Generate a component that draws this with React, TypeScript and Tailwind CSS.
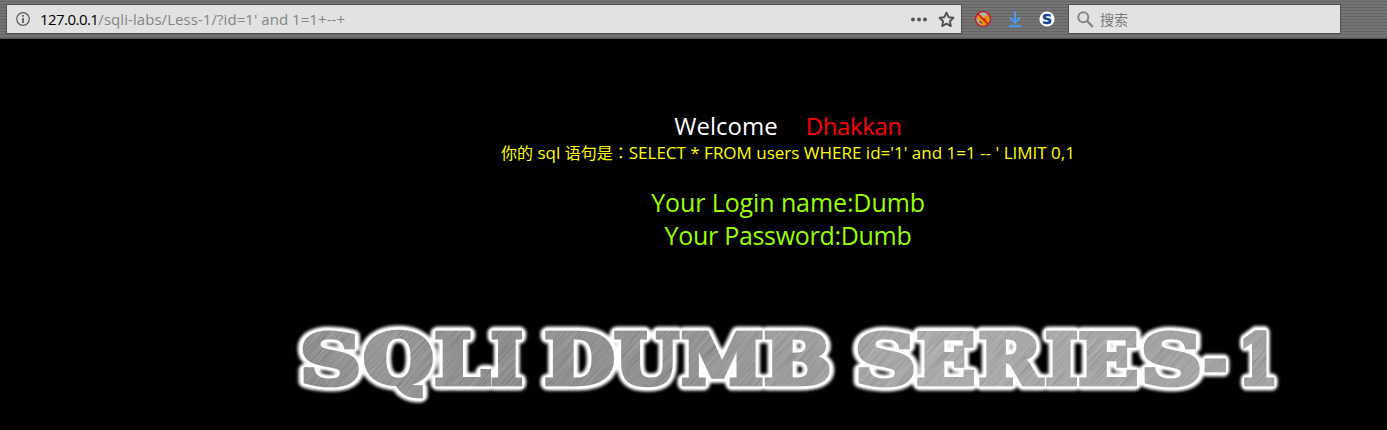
import { useMemo } from 'react';

type Glyph = { ch: string; left: number; right: number };

const glyphs: Glyph[] = [
  { ch: 'S', left: 302, right: 359 },
  { ch: 'Q', left: 363, right: 434 },
  { ch: 'L', left: 435, right: 491 },
  { ch: 'I', left: 491.5, right: 523 },
  { ch: 'D', left: 545, right: 614 },
  { ch: 'U', left: 614, right: 680 },
  { ch: 'M', left: 681, right: 763.5 },
  { ch: 'B', left: 764.5, right: 830 },
  { ch: 'S', left: 857, right: 914 },
  { ch: 'E', left: 917, right: 975 },
  { ch: 'R', left: 979, right: 1045 },
  { ch: 'I', left: 1046, right: 1078 },
  { ch: 'E', left: 1079, right: 1138 },
  { ch: 'S', left: 1143, right: 1200 },
  { ch: '-', left: 1204, right: 1226 },
  { ch: '1', left: 1243, right: 1275 },
];

const STROKE = 4.6;
const SIZE = 69;

function Banner() {
  const placed = useMemo(() => {
    const ctx = document.createElement('canvas').getContext('2d')!;
    ctx.font = `bold ${SIZE}px "DejaVu Serif"`;
    return glyphs.map((g) => {
      const m = ctx.measureText(g.ch);
      const ink = m.actualBoundingBoxRight + m.actualBoundingBoxLeft;
      const sx = (g.right - g.left) / (ink + STROKE);
      const x = g.left + (m.actualBoundingBoxLeft + STROKE / 2) * sx;
      return { ch: g.ch, transform: `translate(${x} 68.7) scale(${sx} 1)` };
    });
  }, []);
  const layer = (props: React.SVGProps<SVGGElement>, hidden: boolean) => (
    <g {...props} aria-hidden={hidden}>
      {placed.map((p, i) => (
        <text key={i} transform={p.transform}>{p.ch}</text>
      ))}
    </g>
  );
  return (
    <svg
      className="block h-[115px] w-[1387px] font-['DejaVu_Serif',serif] text-[69px] font-bold"
      viewBox="0 0 1387 115"
      strokeLinejoin="round"
    >
      <defs>
        <filter id="glow" x="-5%" y="-30%" width="110%" height="160%">
          <feGaussianBlur stdDeviation="1.6" />
        </filter>
        <linearGradient id="steel" gradientUnits="userSpaceOnUse" x1="300" y1="0" x2="1280" y2="0">
          <stop offset="0" stopColor="#7b7b7b" />
          <stop offset="0.07" stopColor="#888888" />
          <stop offset="0.2" stopColor="#7c7c7c" />
          <stop offset="0.4" stopColor="#848484" />
          <stop offset="0.53" stopColor="#949494" />
          <stop offset="0.66" stopColor="#a2a2a2" />
          <stop offset="1" stopColor="#949494" />
        </linearGradient>
        <filter id="brushed" x="0" y="0" width="100%" height="100%">
          <feTurbulence type="fractalNoise" baseFrequency="0.02 0.7" numOctaves="2" seed="4" />
          <feColorMatrix values="1.3 0 0 0 -0.08  1.3 0 0 0 -0.08  1.3 0 0 0 -0.08  0 0 0 0 0.24" />
        </filter>
        <mask id="letters">
          {layer({ fill: '#fff', stroke: '#fff', strokeWidth: STROKE, strokeLinejoin: 'miter' }, true)}
        </mask>
      </defs>
      {layer({ fill: '#fff', stroke: '#fff', strokeWidth: 13, filter: 'url(#glow)' }, true)}
      {layer({ fill: '#fff', stroke: '#fff', strokeWidth: 9 }, false)}
      <g mask="url(#letters)">
        <rect x="290" y="0" width="1000" height="115" fill="url(#steel)" />
        <rect x="0" y="-700" width="1500" height="1800" filter="url(#brushed)" transform="rotate(-48 700 55)" />
      </g>
    </svg>
  );
}

function Toolbar() {
  return (
    <div className="flex h-[39px] items-start border-b border-[#555] bg-[repeating-linear-gradient(0deg,#646464_0px,#646464_1px,#747474_1px,#747474_3px)] pt-[5px] pl-[7px] font-['Open_Sans','Noto_Sans_CJK_SC',sans-serif]">
      <div className="flex h-7 w-[954px] shrink-0 items-center bg-[#e2e2e2] shadow-[0_0_0_1px_#505050]">
        <svg className="ml-[9px] size-[14px] shrink-0" viewBox="0 0 14 14">
          <circle cx="7" cy="7" r="6.3" fill="none" stroke="#5c5c5c" strokeWidth="1.2" />
          <path d="M6.1 3h1.8v1.8H6.1zM6.1 6h1.8v5H6.1z" fill="#5c5c5c" />
        </svg>
        <div className="ml-[10px] w-[320px] text-[15px] whitespace-pre text-[#858585]">
          <span className="tracking-[-0.55px] text-black">127.0.0.1</span>
          <span className="tracking-[0.06px]">/sqli-labs/Less-1/?id=1' and 1=1+--+</span>
        </div>
        <svg className="ml-auto h-[5px] w-4" viewBox="0 0 16 5" fill="#555">
          <circle cx="2" cy="2.5" r="2" />
          <circle cx="8" cy="2.5" r="2" />
          <circle cx="14" cy="2.5" r="2" />
        </svg>
        <svg className="mr-[6px] ml-[11px] size-[17px]" viewBox="0 0 17 17">
          <path d="M8.5 1.7l2.1 4.5 4.9.6-3.6 3.4.9 4.9-4.3-2.4-4.3 2.4.9-4.9L1.5 6.8l4.9-.6z" fill="none" stroke="#505050" strokeWidth="1.9" strokeLinejoin="round" />
        </svg>
      </div>
      <svg className="mt-[5px] ml-[13px] size-[18px] shrink-0" viewBox="0 0 18 18">
        <circle cx="9" cy="9" r="7.5" fill="#aeb8bd" />
        <path d="M3 5l2.2 1.5 2-2 2 3 4-3.3 1.6 2.3.4 5-3.2 3.5H6.5L8 11.5 3.5 10z" fill="#ee8b08" />
        <path d="M4 12l3-1 1.5 3zM9 8l3 1-2 2z" fill="#804c0d" />
        <circle cx="9" cy="9" r="7.4" fill="none" stroke="#c41414" strokeWidth="1.3" />
        <path d="M3.8 3.8l10.4 10.4" stroke="#c41414" strokeWidth="1.4" />
      </svg>
      <svg className="mt-[5px] ml-[14px] size-[18px] shrink-0" viewBox="0 0 18 18" fill="none" stroke="#489cf8" strokeWidth="1.9">
        <path d="M9 1.5v11M3.8 7.5L9 12.7l5.2-5.2M3 16.2h12" />
      </svg>
      <svg className="mt-[5px] ml-[14px] size-[18px] shrink-0" viewBox="0 0 18 18">
        <circle cx="9" cy="9" r="7.6" fill="#fff" />
        <text x="9" y="14.1" textAnchor="middle" className="font-['DejaVu_Sans',sans-serif] text-[14px] font-bold" fill="#153f9a" stroke="#153f9a" strokeWidth="0.4">S</text>
      </svg>
      <div className="ml-[13px] flex h-7 w-[271px] shrink-0 items-center bg-[#e2e2e2] shadow-[0_0_0_1px_#505050]">
        <svg className="ml-2 size-[17px]" viewBox="0 0 17 17" fill="none" stroke="#858585" strokeWidth="2">
          <circle cx="6.3" cy="6.3" r="5" />
          <path d="M10 10l5.8 5.8" strokeWidth="2.4" />
        </svg>
        <span className="ml-[6px] text-[14px] text-[#7b7b7b]">搜索</span>
      </div>
    </div>
  );
}

export default function App() {
  return (
    <div className="flex h-[430px] w-[1387px] flex-col overflow-hidden bg-black font-['Open_Sans','Noto_Sans_CJK_SC',sans-serif]">
      <Toolbar />
      <main className="flex w-[1387px] flex-col items-center pt-[71px] pl-[189px]">
        <div className="flex h-[32px] items-center gap-7 text-[24px] leading-8 whitespace-nowrap">
          <span className="text-white">Welcome</span>
          <span className="tracking-[-0.4px] text-[#f00]">Dhakkan</span>
        </div>
        <div className="h-[22px] text-[17px] leading-[20px] whitespace-pre text-[#ff0]">
          <span className="text-[16px]">你的</span> sql <span className="text-[16px]">语句是</span>
          <span className="font-['Noto_Sans_CJK_TC',sans-serif] text-[16px]" lang="zh-TW">：</span>
          SELECT * FROM users WHERE id='1' and 1=1 -- ' LIMIT 0,1
        </div>
        <div className="mt-[22px] h-[33px] text-[25px] leading-[33px] tracking-[-0.1px] whitespace-nowrap text-[#9f0]">Your Login name:Dumb</div>
        <div className="h-[33px] text-[25px] leading-[33px] tracking-[-0.3px] whitespace-nowrap text-[#9f0]">Your Password:Dumb</div>
      </main>
      <div className="mt-[63px]">
        <Banner />
      </div>
    </div>
  );
}
